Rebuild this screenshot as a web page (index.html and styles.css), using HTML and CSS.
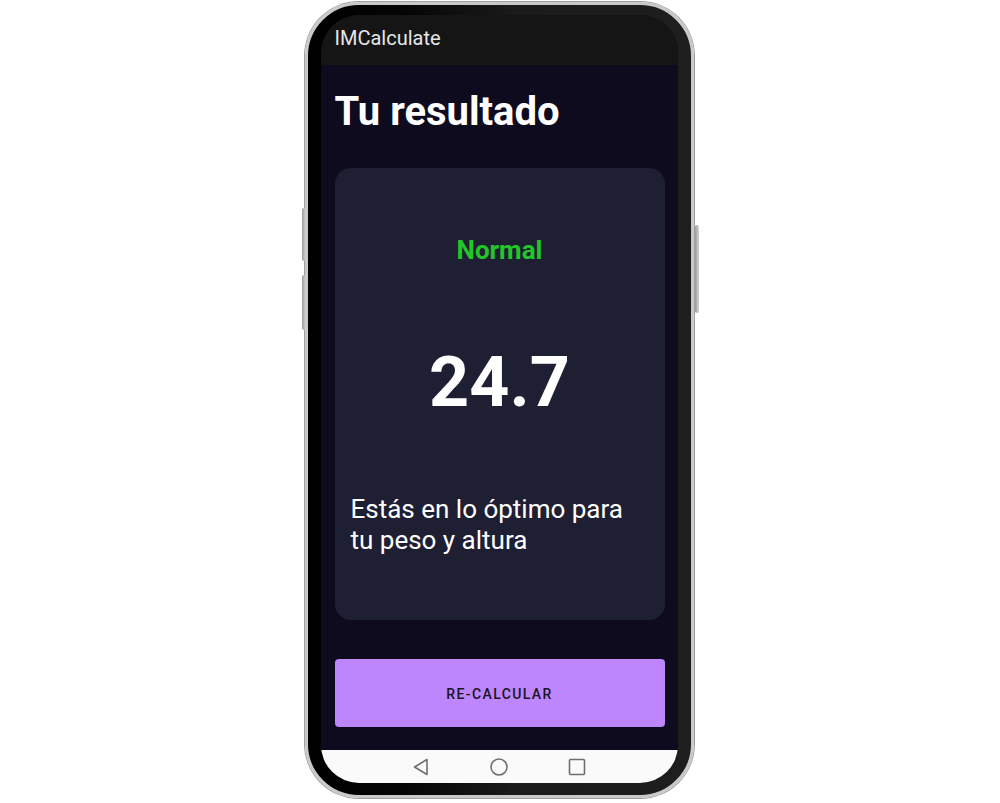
FILE: index.html
```html
<!DOCTYPE html>
<html lang="es">
<head>
<meta charset="utf-8">
<title>IMCalculate</title>
<link rel="stylesheet" href="styles.css">
</head>
<body>
<div class="stage">
  <div class="phone">
    <span class="hw-btn hw-left-1"></span>
    <span class="hw-btn hw-left-2"></span>
    <span class="hw-btn hw-right"></span>
    <div class="screen">
      <header class="appbar">IMCalculate</header>
      <main class="content">
        <h1 class="title">Tu resultado</h1>
        <section class="card">
          <div class="status">Normal</div>
          <div class="value">24.7</div>
          <p class="desc">Estás en lo óptimo para tu peso y altura</p>
        </section>
        <button class="recalc">RE-CALCULAR</button>
      </main>
      <nav class="navbar">
        <svg class="nav-icon" width="18" height="18" viewBox="0 0 18 18"><path d="M15 1.5 L2.5 9 L15 16.5 Z" fill="none" stroke="#6f6f6f" stroke-width="1.6" stroke-linejoin="round"/></svg>
        <svg class="nav-icon" width="20" height="20" viewBox="0 0 20 20"><circle cx="10" cy="10" r="8" fill="none" stroke="#6f6f6f" stroke-width="1.6"/></svg>
        <svg class="nav-icon" width="18" height="18" viewBox="0 0 18 18"><rect x="1.5" y="1.5" width="15" height="15" rx="1" fill="none" stroke="#6f6f6f" stroke-width="1.6"/></svg>
      </nav>
    </div>
  </div>
</div>
</body>
</html>
```
FILE: styles.css
```css
html, body {
  margin: 0;
  padding: 0;
  background: #ffffff;
  font-family: Roboto, "Noto Sans", "Liberation Sans", sans-serif;
}

.stage {
  width: 1000px;
  height: 803px;
  display: flex;
  justify-content: center;
  padding-top: 2px;
  padding-right: 2px;
  box-sizing: border-box;
}

.phone {
  position: relative;
  width: 389px;
  height: 796px;
  box-sizing: border-box;
  border: 3px solid #c9c9c9;
  border-radius: 54px;
  box-shadow: 0 0 0 1px #a0a0a0;
  background: linear-gradient(to right, #000 0%, #050505 25%, #1b1b1b 55%, #1e1e1e 100%);
  padding: 10px 13px 12px 13px;
}

.hw-btn {
  position: absolute;
  width: 4px;
  background: linear-gradient(to right, #9c9c9c, #d4d4d4);
  border-radius: 2px;
}
.hw-left-1 { left: -6px; top: 203px; height: 53px; }
.hw-left-2 { left: -6px; top: 270px; height: 55px; }
.hw-right { right: -8px; top: 220px; height: 88px; }

.screen {
  height: 100%;
  display: flex;
  flex-direction: column;
  border-radius: 38px;
  overflow: hidden;
  background: #0e0b1f;
}

.appbar {
  height: 50px;
  flex: none;
  background: #151515;
  color: #e6e6e6;
  font-size: 20px;
  line-height: 20px;
  padding: 13px 0 0 14px;
  box-sizing: border-box;
}

.content {
  flex: 1;
  display: flex;
  flex-direction: column;
  padding: 23px 13px 0 14px;
}

.title {
  margin: 0;
  color: #ffffff;
  font-size: 40px;
  line-height: 48px;
  font-weight: 700;
}

.card {
  margin-top: 32px;
  height: 452px;
  box-sizing: border-box;
  background: #1f1f33;
  border-radius: 16px;
  padding: 66px 16px 0 16px;
  display: flex;
  flex-direction: column;
}

.status {
  color: #22c629;
  font-size: 26px;
  line-height: 32px;
  font-weight: 700;
  text-align: center;
}

.value {
  margin-top: 76px;
  color: #ffffff;
  font-size: 70px;
  line-height: 80px;
  font-weight: 700;
  text-align: center;
}

.desc {
  margin: 72px 0 0 0;
  color: #ffffff;
  font-size: 26px;
  line-height: 31px;
  font-weight: 400;
}

.recalc {
  margin-top: 39px;
  height: 68px;
  border: none;
  border-radius: 4px;
  background: #bd86fc;
  color: #1b1423;
  font-family: Roboto, "Noto Sans", "Liberation Sans", sans-serif;
  font-size: 14px;
  font-weight: 500;
  letter-spacing: 1.4px;
  padding: 2px 0 0 0;
}

.navbar {
  height: 33px;
  flex: none;
  background: #fafafa;
  display: flex;
  align-items: center;
  justify-content: center;
  gap: 59px;
}

.nav-icon {
  display: block;
}
```
